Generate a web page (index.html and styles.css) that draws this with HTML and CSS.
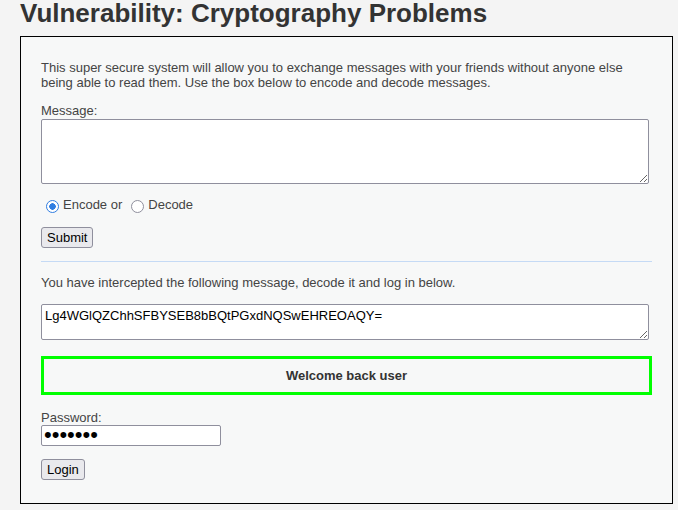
FILE: index.html
```html
<!DOCTYPE html>
<html>
<head>
<meta charset="utf-8">
<link rel="stylesheet" href="styles.css">
</head>
<body>
<div class="page">
  <h1 class="title">Vulnerability: Cryptography Problems</h1>
  <div class="box">
    <p class="intro">This super secure system will allow you to exchange messages with your friends without anyone else being able to read them. Use the box below to encode and decode messages.</p>
    <form class="form">
      <label class="lbl" for="message">Message:</label>
      <textarea id="message" class="msg"></textarea>
      <div class="radios">
        <input type="radio" name="direction" id="enc" class="radio" checked><label for="enc" class="rlabel">Encode or</label>
        <input type="radio" name="direction" id="dec" class="radio"><label for="dec" class="rlabel">Decode</label>
      </div>
      <button type="button" class="btn submit">Submit</button>
    </form>
    <hr class="sep">
    <p class="note">You have intercepted the following message, decode it and log in below.</p>
    <textarea class="cipher">Lg4WGlQZChhSFBYSEB8bBQtPGxdNQSwEHREOAQY=</textarea>
    <div class="success">Welcome back user</div>
    <form class="form login-form">
      <label class="lbl" for="pw">Password:</label>
      <input type="password" id="pw" class="pw" value="1234567">
      <button type="button" class="btn login">Login</button>
    </form>
  </div>
</div>
</body>
</html>
```
FILE: styles.css
```css
html, body {
  margin: 0;
  padding: 0;
  background: #f4f4f4;
}
body {
  font-family: Arial, "Liberation Sans", Helvetica, sans-serif;
  font-size: 13px;
  color: #444;
}
.page {
  padding: 0 5px 0 20px;
}
.title {
  margin: -2px 0 0 0;
  font-size: 26px;
  line-height: 30px;
  font-weight: bold;
  color: #333;
}
.box {
  margin-top: 8px;
  border: 1px solid #000;
  background: #f7f8f8;
  padding: 23px 20px 23px 20px;
}
.intro {
  margin: 0 0 13px 0;
  line-height: 15px;
}
.form {
  margin: 0;
}
.lbl {
  display: block;
  line-height: 15px;
}
.msg,
.cipher {
  display: block;
  box-sizing: border-box;
  width: 608px;
  border: 1px solid #8f8f9d;
  border-radius: 2px;
  background: #fff;
}
.msg {
  height: 65px;
  margin: 1px 0 0 0;
}
.radios {
  margin-top: 13px;
  height: 15px;
  line-height: 15px;
  display: flex;
  align-items: center;
}
.radio {
  appearance: none;
  -webkit-appearance: none;
  box-sizing: border-box;
  width: 13px;
  height: 13px;
  margin: 4px 4px 0 5px;
  border: 1.5px solid #8f8f9d;
  border-radius: 50%;
  background: #fff;
}
.radio:checked {
  border-color: #2f7de1;
  background: radial-gradient(circle, #2f7de1 0 3px, #fff 3.5px);
}
.rlabel {
  margin-right: 4px;
}
.btn {
  display: block;
  box-sizing: border-box;
  height: 21px;
  padding: 0 5px;
  font-family: Arial, "Liberation Sans", sans-serif;
  font-size: 13px;
  color: #000;
  background: #e9e9ed;
  border: 1px solid #8f8f9d;
  border-radius: 3px;
}
.submit {
  margin-top: 15px;
}
.sep {
  margin: 13px 0 0 0;
  border: 0;
  border-top: 1px solid #c5daf5;
  height: 0;
}
.note {
  margin: 13px 0 0 0;
  line-height: 15px;
}
.cipher {
  height: 36px;
  margin: 14px 0 0 0;
  font-family: Arial, "Liberation Sans", sans-serif;
  font-size: 13px;
  color: #000;
  padding: 3px 3px;
}
.success {
  margin-top: 16px;
  border: 3px solid #00ff00;
  height: 33px;
  line-height: 33px;
  text-align: center;
  font-weight: bold;
  color: #333;
}
.login-form {
  margin-top: 15px;
}
.pw {
  display: block;
  box-sizing: border-box;
  width: 180px;
  height: 21px;
  margin: 0;
  padding: 0 2px 1px 2px;
  font-family: "Liberation Sans", Arial, sans-serif;
  font-size: 22px;
  line-height: 19px;
  color: #000;
  background: #fff;
  border: 1px solid #8f8f9d;
  border-radius: 2px;
}
.login {
  margin-top: 13px;
}
```
